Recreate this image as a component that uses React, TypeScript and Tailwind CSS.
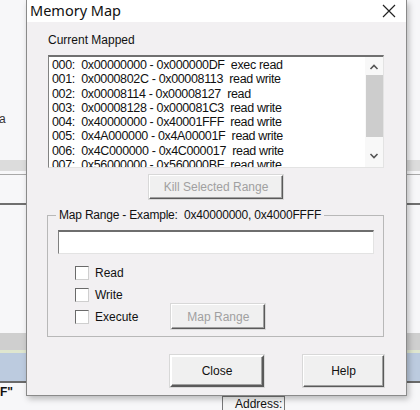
import React from 'react';

const rows = [
  '000:  0x00000000 - 0x000000DF  exec read',
  '001:  0x0000802C - 0x00008113  read write',
  '002:  0x00008114 - 0x00008127  read',
  '003:  0x00008128 - 0x000081C3  read write',
  '004:  0x40000000 - 0x40001FFF  read write',
  '005:  0x4A000000 - 0x4A00001F  read write',
  '006:  0x4C000000 - 0x4C000017  read write',
  '007:  0x56000000 - 0x560000BF  read write',
];

const Check = ({ label }: { label: string }) => (
  <div className="flex items-center gap-[6px] h-[22px]">
    <div className="w-[14px] h-[14px] bg-white border border-[#6a6a6a] border-r-[#cfcfcf] border-b-[#cfcfcf]" />
    <span>{label}</span>
  </div>
);

const Btn = ({ children, disabled, className }: { children: React.ReactNode; disabled?: boolean; className: string }) => (
  <div
    className={`flex items-center justify-center bg-[#f0f0f0] border border-[#ffffff] border-r-[#5a5a5a] border-b-[#5a5a5a] shadow-[inset_-1px_-1px_0_#a0a0a0,0_0_0_1px_#d8d8d8] ${disabled ? 'text-[#a0a0a0]' : 'text-[#111]'} ${className}`}
  >
    {children}
  </div>
);

export default function App() {
  return (
    <div className="relative w-[420px] h-[410px] overflow-hidden bg-[#f7f7f9] text-[12px] text-[#111]" style={{ fontFamily: '"Liberation Sans", Arial, sans-serif' }}>
      {/* background window bits */}
      <div className="absolute left-[-1px] top-[110px] text-[12px] text-[#333]">a</div>
      <div className="absolute left-0 right-0 top-[160px] h-[11px] bg-[#dcdcdc]" />
      <div className="absolute left-0 right-0 top-[174px] h-[1px] bg-[#a8a8a8]" />
      <div className="absolute left-0 right-0 top-[203px] h-[2px] bg-[#707070]" />
      <div className="absolute left-0 right-0 top-[333px] h-[17px] bg-[#cfcfcf]" />
      <div className="absolute left-0 right-0 top-[350px] h-[3px] bg-[#dfe6cf]" />
      <div className="absolute left-0 right-0 top-[353px] h-[28px] bg-[#bccbdf]" />
      <div className="absolute left-0 right-0 top-[381px] h-[2px] bg-[#6a6a6a]" />
      <div className="absolute left-0 top-[386px] font-bold text-[12px] leading-none">F"</div>
      <div className="absolute left-[222px] top-[396px] w-[63px] h-[20px] border border-[#777] bg-[#f4f4f4] pl-[12px] text-[12px] leading-[14px]">Address:</div>

      {/* dialog */}
      <div className="absolute left-[26px] top-0 w-[381px] h-[396px] bg-[#f2f0f2] border border-[#8a8a8a] border-t-0 shadow-[2px_3px_6px_rgba(0,0,0,0.25)] flex flex-col">
        <div className="h-[22px] bg-white flex items-start justify-between pl-[3px] pr-[8px] pt-[1px]" style={{ fontFamily: '"Noto Sans", sans-serif' }}>
          <span className="text-[14.5px] leading-[18px] text-[#111]">Memory Map</span>
          <svg width="14" height="14" viewBox="0 0 14 14" className="mr-[2px] mt-[3px]">
            <path d="M1 1L13 13M13 1L1 13" stroke="#222" strokeWidth="1.2" />
          </svg>
        </div>
        <div className="flex flex-col pl-[21px] pr-[22px] pt-[11px]">
          <div className="leading-[14px] h-[22px]">Current Mapped</div>
          <div className="flex h-[113px] bg-white border border-[#828282] border-r-[#e3e3e3] border-b-[#e3e3e3] border-t-2 border-t-[#707070]">
            <div className="flex-1 overflow-hidden pl-[3px] pt-[1px] whitespace-pre leading-[14.3px] text-[12.5px] tracking-[-0.35px]">
              {rows.map(r => (
                <div key={r}>{r}</div>
              ))}
            </div>
            <div className="w-[18px] flex flex-col items-center bg-[#f8f8f8]">
              <svg width="10" height="8" viewBox="0 0 10 8" className="mt-[6px]">
                <path d="M1.5 6L5 2.5L8.5 6" stroke="#555" strokeWidth="1.6" fill="none" />
              </svg>
              <div className="w-[17px] h-[62px] bg-[#cdcdcd] mt-[4px]" />
              <div className="flex-1" />
              <svg width="10" height="8" viewBox="0 0 10 8" className="mb-[7px]">
                <path d="M1.5 2L5 5.5L8.5 2" stroke="#555" strokeWidth="1.6" fill="none" />
              </svg>
            </div>
          </div>
          <div className="flex justify-center mt-[7px]">
            <Btn disabled className="w-[134px] h-[24px]">Kill Selected Range</Btn>
          </div>
          <div className="relative mt-[16px] ml-[-1px] h-[122px] border border-[#b8b8b8] pl-[10px] pr-[9px]">
            <div className="absolute left-[8px] top-[-9px] bg-[#f2f0f2] px-[3px] leading-[16px] whitespace-pre tracking-[-0.2px]">Map Range - Example:  0x40000000, 0x4000FFFF</div>
            <div className="mt-[14px] h-[24px] bg-white border border-[#808080] border-r-[#e3e3e3] border-b-[#e3e3e3] border-t-2 border-t-[#6e6e6e]" />
            <div className="flex items-end mt-[8px] pl-[17px]">
              <div className="flex flex-col">
                <Check label="Read" />
                <Check label="Write" />
                <Check label="Execute" />
              </div>
              <Btn disabled className="w-[94px] h-[25px] ml-[33px] mb-[-1px]">Map Range</Btn>
            </div>
          </div>
          <div className="flex mt-[18px] pl-[122px]">
            <Btn className="w-[94px] h-[32px] border-[#707070] border-2">Close</Btn>
            <Btn className="w-[81px] h-[32px] ml-[39px]">Help</Btn>
          </div>
        </div>
      </div>
    </div>
  );
}
